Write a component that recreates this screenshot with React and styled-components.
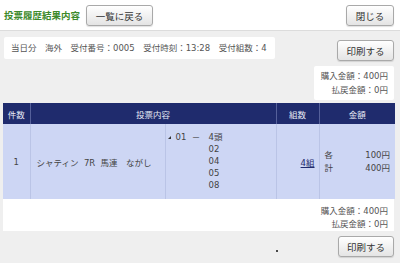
import React from "react";
import styled, { createGlobalStyle } from "styled-components";

const GlobalStyle = createGlobalStyle`
  html, body {
    margin: 0;
    padding: 0;
    background: #efefef;
    font-family: "DejaVu Sans", "Noto Sans CJK JP", sans-serif;
    color: #444;
  }
`;

const Page = styled.div`
  width: 400px;
  height: 263px;
  position: relative;
  overflow: hidden;
  background: #efefef;
`;

const Header = styled.div`
  height: 31px;
  box-sizing: border-box;
  background: #fff;
  border-bottom: 1px solid #dcdcdc;
  display: flex;
  align-items: flex-start;
  padding: 5px 6px 0 4px;
  gap: 6px;

  h1 {
    margin: 0;
    font-family: "Noto Sans CJK JP", sans-serif;
    font-size: 9.5px;
    line-height: 20px;
    font-weight: bold;
    color: #3d8a2b;
  }
`;

const Button = styled.button`
  height: ${(p) => p.$h || 21}px;
  width: ${(p) => p.$w}px;
  padding: 0;
  margin: ${(p) => p.$m || 0};
  border: 1px solid #a9a9a9;
  border-radius: 3px;
  background: linear-gradient(#ffffff, #e4e4e4);
  box-shadow: 0 1px 1px rgba(0, 0, 0, 0.12);
  font-family: "Noto Sans CJK JP", sans-serif;
  font-size: 9.5px;
  color: #333;
  cursor: pointer;
`;

const Spacer = styled.div`
  flex: 1;
`;

const Content = styled.div`
  padding: 6px 6px 0 3px;
`;

const TopRow = styled.div`
  display: flex;
  align-items: flex-start;
  padding-left: 1px;
`;

const InfoBox = styled.div`
  height: 22px;
  box-sizing: border-box;
  background: #fff;
  border-radius: 2px;
  padding: 0 8px 0 7px;
  font-size: 8.5px;
  line-height: 22px;
  color: #555;
  white-space: pre;
`;

const SumBox = styled.div`
  background: #fff;
  border-radius: ${(p) => (p.$wide ? "0" : "2px")};
  margin: ${(p) => p.$m || 0};
  width: ${(p) => (p.$wide ? "auto" : "80px")};
  height: ${(p) => (p.$wide ? "32px" : "34px")};
  box-sizing: border-box;
  padding: ${(p) => (p.$wide ? "6px 6px 0 0" : "3px 6px 0 0")};
  font-size: 8.5px;
  line-height: ${(p) => (p.$wide ? "13px" : "14px")};
  color: #555;
  text-align: right;
`;

const Stack = styled.div`
  display: flex;
  flex-direction: column;
`;

const Table = styled.table`
  width: 392px;
  border-collapse: collapse;
  table-layout: fixed;
  font-size: 8.5px;
  color: #444;
`;

const Th = styled.th`
  background: #1f2b6d;
  color: #e6e9f4;
  font-weight: normal;
  font-family: "Noto Sans CJK JP", sans-serif;
  height: 21px;
  padding: 0;
  border-left: 1px solid #55609a;
  &:first-child {
    border-left: none;
  }
`;

const Td = styled.td`
  background: #cdd6f4;
  border-left: 1px solid #bac4e6;
  vertical-align: middle;
  text-align: ${(p) => p.$align || "left"};
  padding: ${(p) => p.$pad || 0};
  &:first-child {
    border-left: none;
  }
`;

const Selection = styled.div`
  display: grid;
  grid-template-columns: 41px auto;
  line-height: 12px;
  padding: 7px 0 8px 2px;
`;

const Tri = styled.span`
  display: inline-block;
  width: 0;
  height: 0;
  border-left: 3px solid transparent;
  border-bottom: 3px solid #333;
  margin-right: 5px;
  vertical-align: 1px;
`;

const Link = styled.a`
  color: #1f2b6d;
  text-decoration: underline;
`;

const Amounts = styled.div`
  display: grid;
  grid-template-columns: auto 1fr;
  line-height: 13px;
  span:nth-child(2n) {
    text-align: right;
  }
`;

const Dot = styled.div`
  position: absolute;
  left: 276px;
  top: 250px;
  width: 2px;
  height: 2px;
  background: #111;
  border-radius: 1px;
`;

const selections = ["02", "04", "05", "08"];

export default function App() {
  return (
    <Page>
      <GlobalStyle />
      <Header>
        <h1>投票履歴結果内容</h1>
        <Button $w={67} $h={21}>一覧に戻る</Button>
        <Spacer />
        <Button $w={48} $h={21}>閉じる</Button>
      </Header>
      <Content>
        <TopRow>
          <InfoBox>{"当日分　海外　受付番号：0005　受付時刻：13:28　受付組数：4"}</InfoBox>
          <Spacer />
          <Stack>
            <Button $w={57} $h={21} $m="3px 0 0 auto">印刷する</Button>
            <SumBox $m="5px 0 3px 0">
              <div>購入金額：400円</div>
              <div>払戻金額：0円</div>
            </SumBox>
          </Stack>
        </TopRow>
        <Table>
          <colgroup>
            <col style={{ width: 27 }} />
            <col style={{ width: 135 }} />
            <col style={{ width: 111 }} />
            <col style={{ width: 43 }} />
            <col style={{ width: 76 }} />
          </colgroup>
          <thead>
            <tr>
              <Th>件数</Th>
              <Th colSpan={2}>投票内容</Th>
              <Th>組数</Th>
              <Th>金額</Th>
            </tr>
          </thead>
          <tbody>
            <tr>
              <Td $align="center">1</Td>
              <Td $pad="0 0 0 6px">シャティン&nbsp;&nbsp;7R&nbsp;&nbsp;馬連　ながし</Td>
              <Td>
                <Selection>
                  <span>
                    <Tri />
                    01&nbsp;&nbsp;－
                  </span>
                  <span>4頭</span>
                  {selections.map((s) => (
                    <React.Fragment key={s}>
                      <span />
                      <span>{s}</span>
                    </React.Fragment>
                  ))}
                </Selection>
              </Td>
              <Td $align="right" $pad="0 4px 0 0">
                <Link>4組</Link>
              </Td>
              <Td $pad="0 5px 0 5px">
                <Amounts>
                  <span>各</span>
                  <span>100円</span>
                  <span>計</span>
                  <span>400円</span>
                </Amounts>
              </Td>
            </tr>
          </tbody>
        </Table>
        <SumBox $wide>
          <div>購入金額：400円</div>
          <div>払戻金額：0円</div>
        </SumBox>
        <TopRow>
          <Spacer />
          <Button $w={56} $h={21} $m="5px 0 0 0">印刷する</Button>
        </TopRow>
      </Content>
      <Dot />
    </Page>
  );
}
